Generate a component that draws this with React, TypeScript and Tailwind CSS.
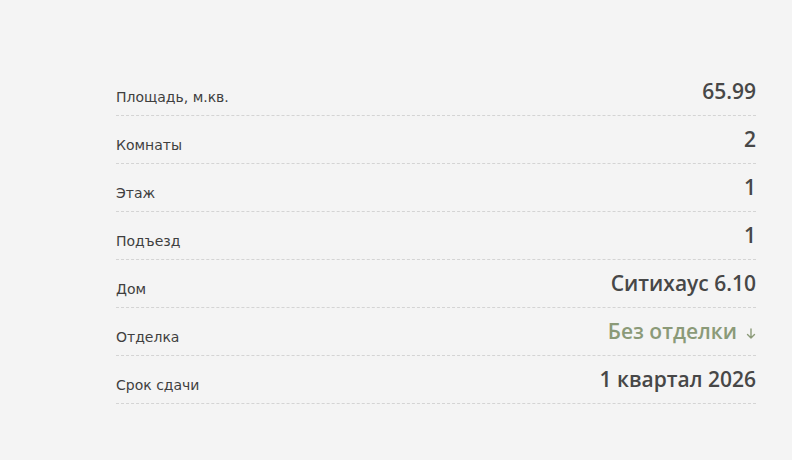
import React from "react";

interface Row {
  label: string;
  value: string;
  accent?: boolean;
}

const rows: Row[] = [
  { label: "Площадь, м.кв.", value: "65.99" },
  { label: "Комнаты", value: "2" },
  { label: "Этаж", value: "1" },
  { label: "Подъезд", value: "1" },
  { label: "Дом", value: "Ситихаус 6.10" },
  { label: "Отделка", value: "Без отделки", accent: true },
  { label: "Срок сдачи", value: "1 квартал 2026" },
];

const App: React.FC = () => {
  return (
    <div className="w-[792px] h-[460px] bg-[#f4f4f4] pt-[68px] pl-[116px]">
      <div className="w-[640px]">
        {rows.map((row) => (
          <div
            key={row.label}
            className="h-12 flex justify-between items-end pb-[9px] border-b border-dashed border-[#d4d4d4]"
          >
            <span className="text-[14px] text-[#3f3f3f] leading-none mb-[2px] font-['DejaVu_Sans',sans-serif]">
              {row.label}
            </span>
            <span
              className={`flex items-center text-[21px] leading-none tracking-[0px] font-semibold mb-[4px] font-['Open_Sans',sans-serif] ${
                row.accent ? "text-[#8b9a78]" : "text-[#474747]"
              }`}
            >
              {row.value}
              {row.accent && (
                <svg
                  width="10"
                  height="11"
                  viewBox="0 0 10 11"
                  className="ml-[9px] mt-[3px]"
                  fill="none"
                  stroke="currentColor"
                  strokeWidth="1.4"
                  strokeLinecap="round"
                  strokeLinejoin="round"
                >
                  <path d="M5 1v9M1.5 6.5 5 10l3.5-3.5" />
                </svg>
              )}
            </span>
          </div>
        ))}
      </div>
    </div>
  );
};

export default App;
